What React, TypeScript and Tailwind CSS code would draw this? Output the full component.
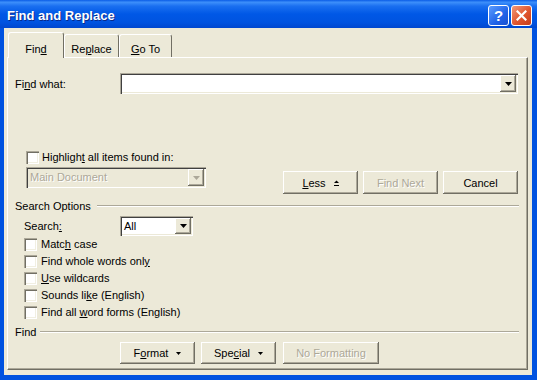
import React from 'react';

// classic 3D bevels used by the dialog controls
const raised = 'shadow-[inset_-1px_-1px_#716f64,inset_1px_1px_#fff,inset_-2px_-2px_#aca899]';
const sunken = 'shadow-[inset_1px_1px_#aca899,inset_2px_2px_#404040,inset_-1px_-1px_#fff,inset_-2px_-2px_#ece9d8]';
const boxBevel = 'shadow-[inset_1px_1px_#aca899,inset_2px_2px_#716f64,inset_-1px_-1px_#fff,inset_-2px_-2px_#f1efe2]';
const disabledText = 'text-[#aca899] [text-shadow:1px_1px_#fff]';

const U = ({ children }: { children: React.ReactNode }) => (
  <span className="underline underline-offset-[1px]">{children}</span>
);

function DownArrow({ color = '#000' }: { color?: string }) {
  return (
    <svg width="7" height="4" viewBox="0 0 7 4">
      <polygon points="0,0 7,0 3.5,4" fill={color} />
    </svg>
  );
}

function SmallArrow() {
  return (
    <svg width="5" height="3" viewBox="0 0 5 3">
      <polygon points="0,0 5,0 2.5,3" fill="#000" />
    </svg>
  );
}

function LessIcon() {
  return (
    <svg width="5" height="7" viewBox="0 0 5 7">
      <polygon points="0,3 2.5,0.5 5,3" fill="#000" />
      <rect x="0" y="5" width="5" height="1" fill="#000" />
    </svg>
  );
}

function DropBtn({ disabled }: { disabled?: boolean }) {
  return (
    <div className={`w-[16px] h-[17px] bg-[#ece9d8] flex items-center justify-center ${raised}`}>
      <DownArrow color={disabled ? '#aca899' : '#000'} />
    </div>
  );
}

function Btn({ className, disabled, children }: { className: string; disabled?: boolean; children: React.ReactNode }) {
  return (
    <div className={`flex items-center justify-center pt-[1px] bg-[#ece9d8] ${raised} ${disabled ? disabledText : 'text-black'} ${className}`}>
      {children}
    </div>
  );
}

function Check({ children }: { children: React.ReactNode }) {
  return (
    <div className="h-[17px] flex items-center gap-[4px] ml-[16px]">
      <span className={`w-[13px] h-[13px] bg-white ${boxBevel}`} />
      <span>{children}</span>
    </div>
  );
}

function Group({ label, gap }: { label: string; gap: string }) {
  return (
    <div className="h-[14px] flex items-center ml-[7px] mr-[8px]">
      <span>{label}</span>
      <div className={`flex-1 h-[2px] border-t border-t-[#aca899] border-b border-b-white ${gap}`} />
    </div>
  );
}

export default function App() {
  return (
    <div className="w-[537px] h-[380px] bg-[#0052e0] flex flex-col font-['Liberation_Sans',Arial,sans-serif] text-[11px] leading-[13px] text-black select-none">
      {/* Title bar */}
      <div className="h-[28px] shrink-0 flex items-center justify-between pl-[7px] pr-[5px] pt-[2px] bg-[linear-gradient(to_bottom,#0a5ce6_0%,#3d8ffa_8%,#1a6ff0_22%,#0058e6_50%,#0053e0_80%,#0047cf_100%)]">
        <span className="text-white font-bold text-[13px] [text-shadow:1px_1px_#0a2a8a]">Find and Replace</span>
        <div className="flex gap-[2px]">
          <div className="w-[21px] h-[21px] rounded-[3px] border border-white bg-[linear-gradient(135deg,#5a9cff_0%,#2163e8_60%,#1a50d0_100%)] flex items-center justify-center text-white font-bold text-[15px] leading-none">
            ?
          </div>
          <div className="w-[21px] h-[21px] rounded-[3px] border border-white bg-[linear-gradient(135deg,#f29a7a_0%,#e0552e_55%,#c73d1a_100%)] flex items-center justify-center">
            <svg width="11" height="11" viewBox="0 0 11 11">
              <path d="M1.5 1.5 L9.5 9.5 M9.5 1.5 L1.5 9.5" stroke="#fff" strokeWidth="2.2" strokeLinecap="square" />
            </svg>
          </div>
        </div>
      </div>

      {/* Client area */}
      <div className="ml-[4px] mr-[5px] h-[347px] bg-[#ece9d8] pl-[3px] pt-[4px] flex flex-col">
        {/* Tabs */}
        <div className="h-[25px] flex items-end ml-[1px] relative z-10">
          <div className="w-[56px] h-[26px] -mb-[1px] bg-[#ece9d8] border-t border-l border-white border-r border-r-[#716f64] rounded-t-[3px] pt-[10px] text-center">
            Fin<U>d</U>
          </div>
          <div className="w-[55px] h-[23px] bg-[#ece9d8] border-t border-l border-white border-r border-r-[#716f64] rounded-t-[3px] pt-[8px] text-center">
            Re<U>p</U>lace
          </div>
          <div className="w-[53px] h-[23px] bg-[#ece9d8] border-t border-l border-white border-r border-r-[#716f64] rounded-t-[3px] pt-[8px] text-center">
            <U>G</U>o To
          </div>
        </div>

        {/* Tab panel */}
        <div className="w-[521px] h-[313px] border-t border-l border-white border-r border-b border-r-[#716f64] border-b-[#716f64] shadow-[inset_-1px_-1px_#aca899] flex flex-col">
          {/* Find what */}
          <div className="mt-[15px] h-[21px] flex items-center ml-[7px]">
            <span className="w-[105px] pt-[1px]">
              Fi<U>n</U>d what:
            </span>
            <div className={`w-[398px] h-[21px] bg-white ${sunken} flex justify-end items-start pt-[2px] pr-[2px]`}>
              <DropBtn />
            </div>
          </div>

          {/* Highlight */}
          <div className="mt-[57px] h-[13px] flex items-center gap-[3px] ml-[18px]">
            <span className={`w-[13px] h-[13px] bg-white ${boxBevel}`} />
            <span>
              Highligh<U>t</U> all items found in:
            </span>
          </div>

          {/* Main document + buttons */}
          <div className="mt-[3px] h-[27px] flex items-start ml-[18px]">
            <div className={`w-[180px] h-[21px] ${sunken} flex items-center justify-between pl-[4px] pr-[2px]`}>
              <span className={disabledText}>Main Document</span>
              <DropBtn disabled />
            </div>
            <div className="ml-[77px] mt-[4px] flex gap-[5px]">
              <Btn className="w-[75px] h-[23px] gap-[8px]">
                <span>
                  <U>L</U>ess
                </span>
                <LessIcon />
              </Btn>
              <Btn className="w-[75px] h-[23px]" disabled>
                Find Next
              </Btn>
              <Btn className="w-[75px] h-[23px]">Cancel</Btn>
            </div>
          </div>

          <div className="mt-[5px]">
            <Group label="Search Options" gap="ml-[6px]" />
          </div>

          {/* Search */}
          <div className="mt-[3px] h-[20px] flex items-center ml-[16px]">
            <span className="w-[96px]">
              Search<U>:</U>
            </span>
            <div className={`w-[73px] h-[20px] bg-white ${sunken} flex items-center justify-between pl-[4px] pr-[2px]`}>
              <span>All</span>
              <div className="w-[16px] h-[16px] bg-[#ece9d8] flex items-center justify-center shadow-[inset_-1px_-1px_#716f64,inset_1px_1px_#fff,inset_-2px_-2px_#aca899]">
                <DownArrow />
              </div>
            </div>
          </div>

          <Check>
            Matc<U>h</U> case
          </Check>
          <Check>
            Find whole words onl<U>y</U>
          </Check>
          <Check>
            <U>U</U>se wildcards
          </Check>
          <Check>
            Sounds li<U>k</U>e (English)
          </Check>
          <Check>
            Find all <U>w</U>ord forms (English)
          </Check>

          <div className="mt-[4px]">
            <Group label="Find" gap="ml-[4px]" />
          </div>

          {/* Bottom buttons */}
          <div className="mt-[3px] ml-[112px] flex">
            <Btn className="w-[75px] h-[22px] gap-[8px]">
              <span>
                F<U>o</U>rmat
              </span>
              <SmallArrow />
            </Btn>
            <Btn className="w-[75px] h-[22px] gap-[8px] ml-[6px]">
              <span>
                Spe<U>c</U>ial
              </span>
              <SmallArrow />
            </Btn>
            <Btn className="w-[96px] h-[22px] ml-[7px]" disabled>
              No Formatting
            </Btn>
          </div>
        </div>
      </div>
    </div>
  );
}
